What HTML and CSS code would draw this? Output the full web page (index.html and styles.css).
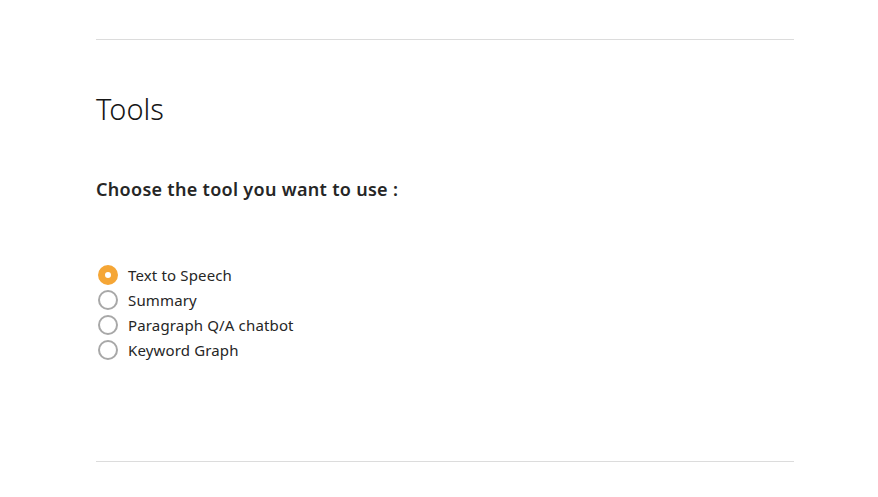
FILE: index.html
```html
<!DOCTYPE html>
<html lang="en">
<head>
<meta charset="utf-8">
<title>Tools</title>
<link rel="stylesheet" href="styles.css">
</head>
<body>
<main class="page">
  <hr class="rule">
  <section class="tools">
    <h1 class="title">Tools</h1>
    <h2 class="question">Choose the tool you want to use :</h2>
    <div class="options">
      <label class="option"><span class="radio checked"></span><span class="label">Text to Speech</span></label>
      <label class="option"><span class="radio"></span><span class="label">Summary</span></label>
      <label class="option"><span class="radio"></span><span class="label">Paragraph Q/A chatbot</span></label>
      <label class="option"><span class="radio"></span><span class="label">Keyword Graph</span></label>
    </div>
  </section>
  <hr class="rule">
</main>
</body>
</html>
```
FILE: styles.css
```css
html, body {
  margin: 0;
  padding: 0;
  background: #ffffff;
}
body {
  font-family: "Noto Sans", "Open Sans", sans-serif;
  color: #262626;
}
.page {
  width: 698px;
  margin-left: 96px;
  padding-top: 39px;
}
.rule {
  margin: 0;
  border: 0;
  height: 1px;
  background: #dcdcdc;
}
.tools {
  height: 421px;
  display: flex;
  flex-direction: column;
}
.title {
  margin: 50px 0 0 0;
  font-size: 29px;
  font-weight: 300;
  line-height: 38px;
  color: #161616;
}
.question {
  margin: 49px 0 0 0;
  font-size: 18px;
  font-weight: 600;
  line-height: 24px;
  letter-spacing: 0.3px;
  color: #262626;
}
.options {
  margin-top: 61px;
  display: flex;
  flex-direction: column;
}
.option {
  display: flex;
  align-items: center;
  height: 25px;
  gap: 10px;
}
.radio {
  box-sizing: border-box;
  width: 20px;
  height: 20px;
  border-radius: 50%;
  border: 2px solid #a8a8a8;
  margin-left: 2px;
  flex: none;
}
.radio.checked {
  border: 7px solid #f5a636;
  background: #ffffff;
}
.label {
  font-size: 15px;
  letter-spacing: 0.15px;
  color: #262626;
}
```
